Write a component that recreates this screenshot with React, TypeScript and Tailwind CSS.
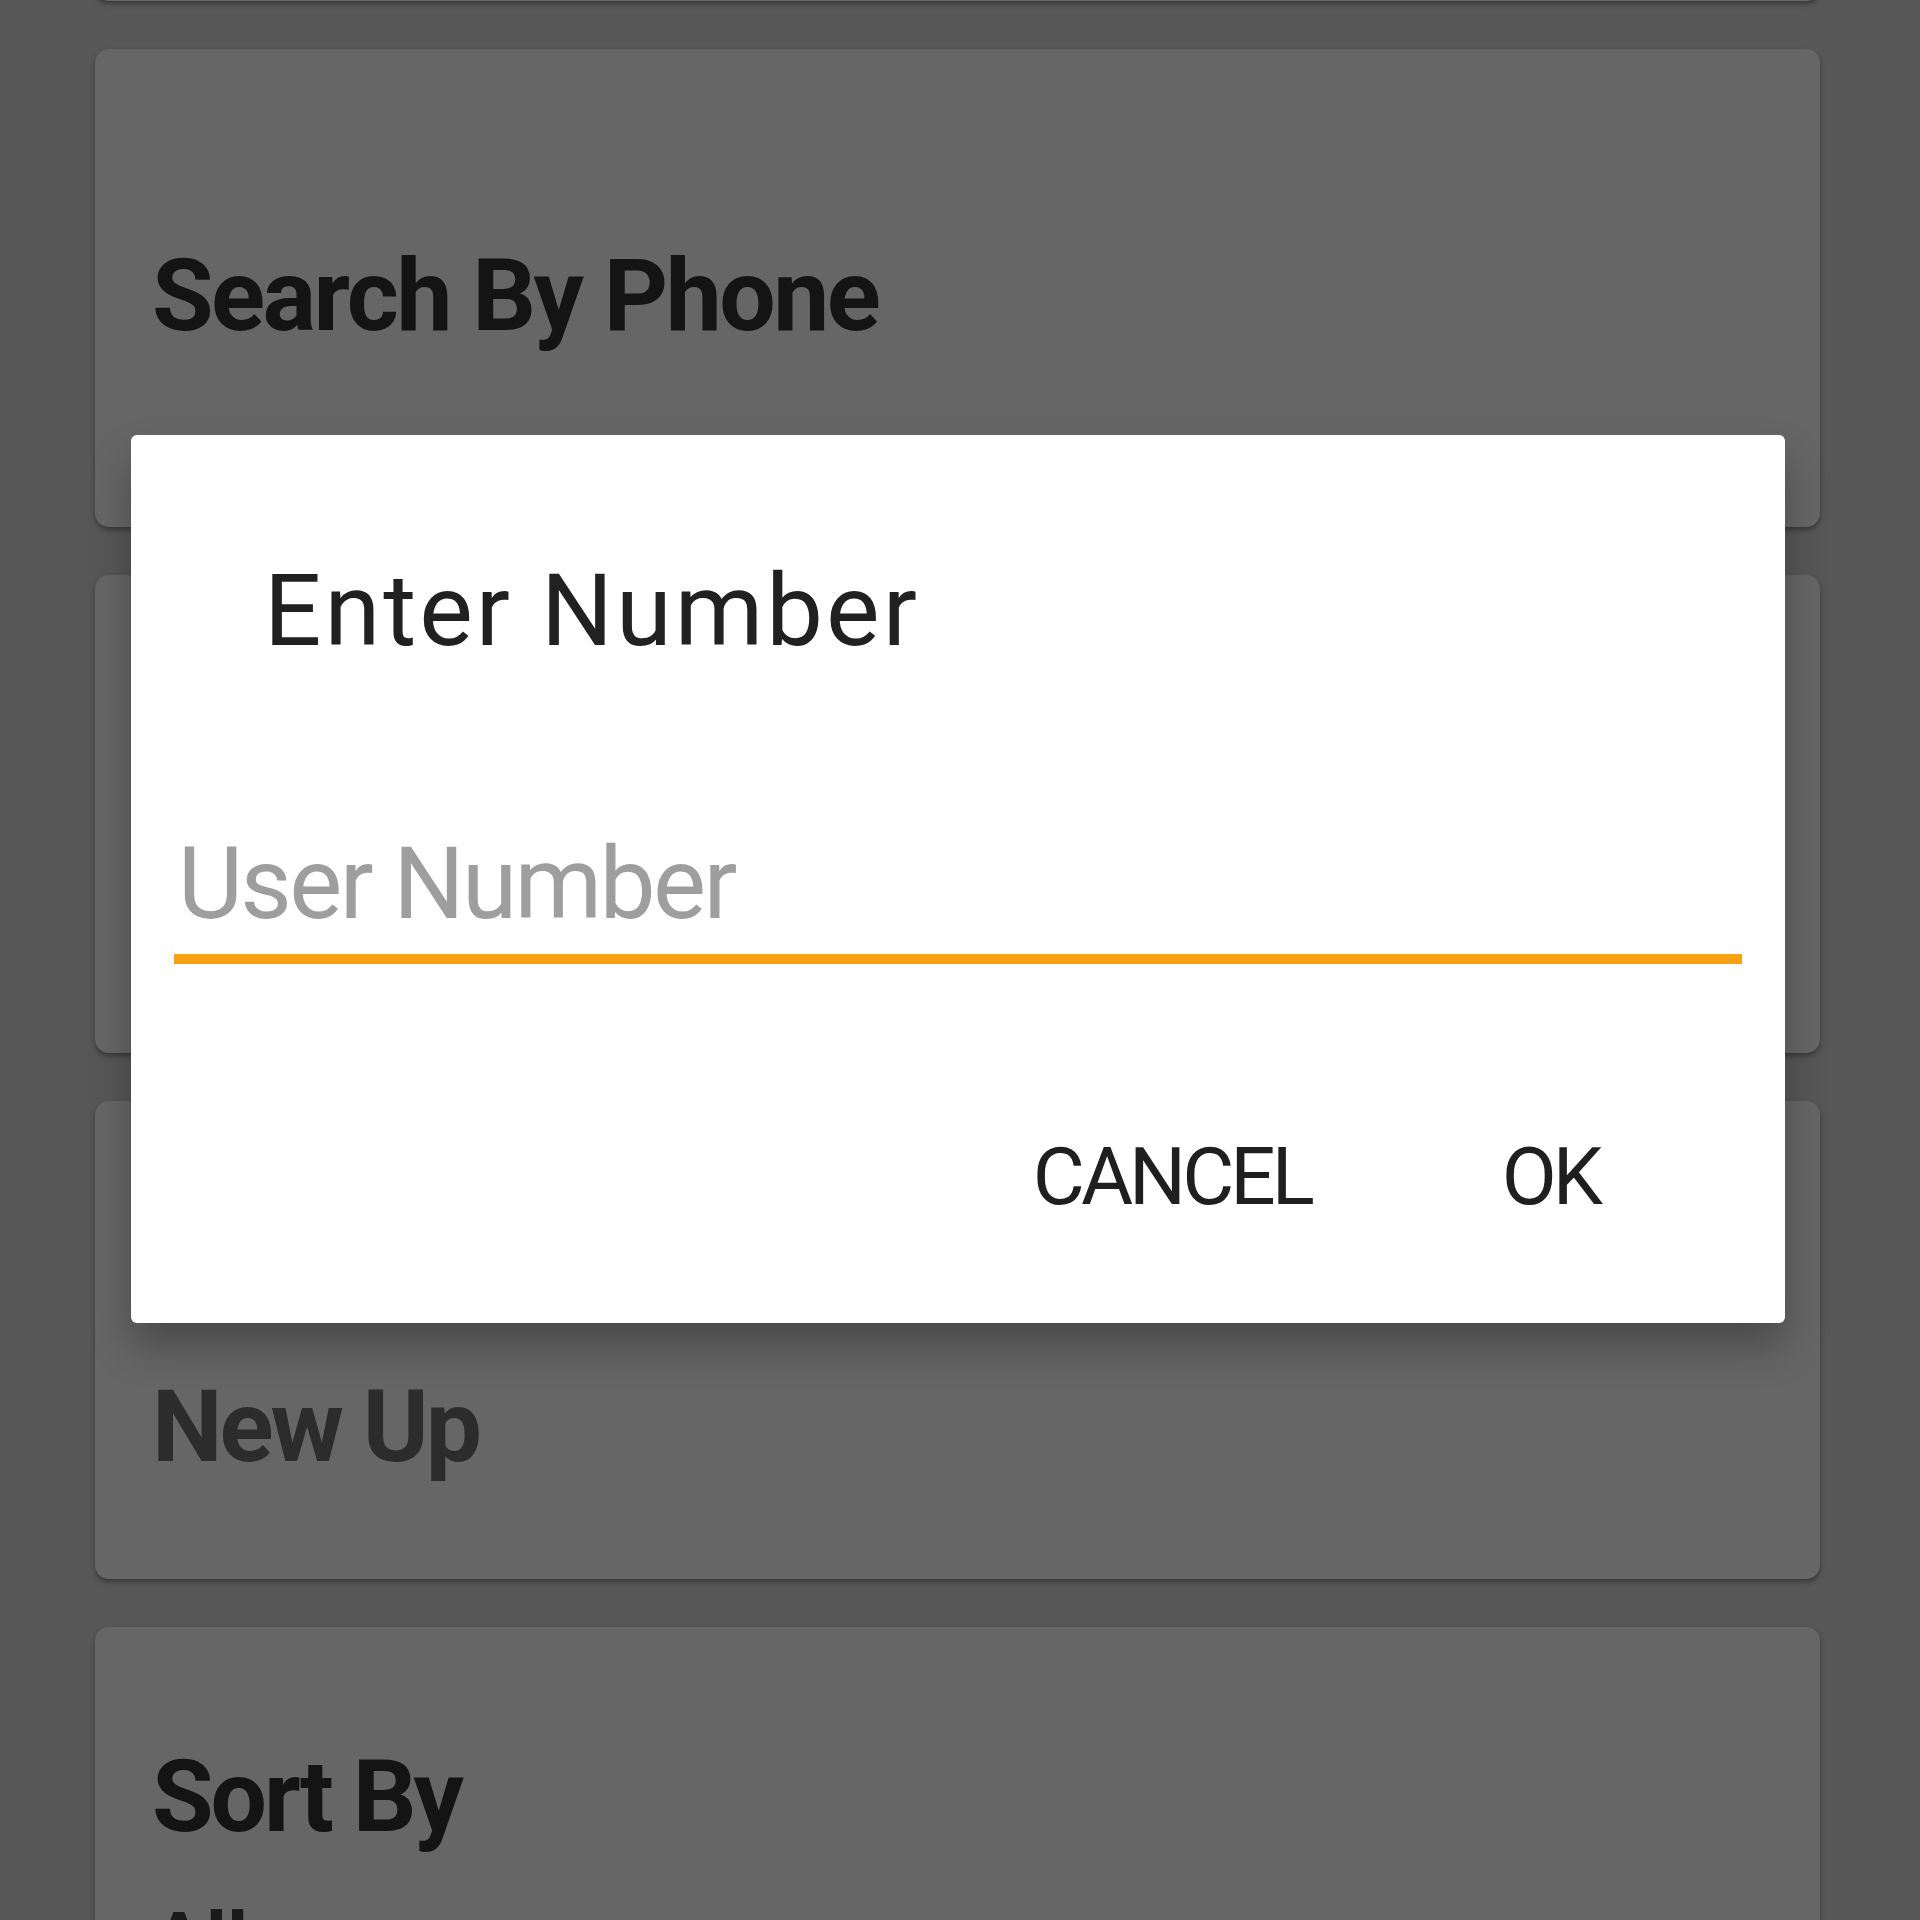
import React from "react";

export default function App() {
  return (
    <div className="relative w-[1920px] h-[1920px] overflow-hidden bg-[#575757] font-['Roboto','Liberation_Sans',sans-serif]">
      <div className="flex flex-col gap-[48px] pl-[95px] pr-[100px]">
        <div className="-mt-[477px] h-[478px] rounded-[14px] bg-[#666666] shadow-[0_3px_5px_rgba(0,0,0,0.35)]" />
        <div className="h-[478px] rounded-[14px] bg-[#666666] shadow-[0_3px_5px_rgba(0,0,0,0.35)] pt-[197px] pl-[57px]">
          <div className="text-[100px] leading-none font-bold tracking-[-2.5px] text-[#141414]">Search By Phone</div>
        </div>
        <div className="h-[478px] rounded-[14px] bg-[#666666] shadow-[0_3px_5px_rgba(0,0,0,0.35)]" />
        <div className="h-[478px] rounded-[14px] bg-[#666666] shadow-[0_3px_5px_rgba(0,0,0,0.35)] pt-[276px] pl-[57px]">
          <div className="text-[100px] leading-none font-bold tracking-[-3px] text-[#2c2c2c]">New Up</div>
        </div>
        <div className="h-[478px] rounded-[14px] bg-[#666666] shadow-[0_3px_5px_rgba(0,0,0,0.35)] pt-[120px] pl-[57px]">
          <div className="text-[100px] leading-none font-bold tracking-[-3px] text-[#141414]">Sort By</div>
          <div className="mt-[55px] text-[80px] leading-none font-bold text-[#1a1a1a]">All</div>
        </div>
      </div>

      <div className="absolute left-[131px] top-[435px] w-[1654px] h-[888px] rounded-[6px] bg-white shadow-[0_24px_40px_rgba(0,0,0,0.28)] flex flex-col">
        <div className="pt-[125px] pl-[133px] text-[101px] leading-none tracking-[3px] text-[#212121]">Enter Number</div>
        <div className="mx-[43px] mt-[173px]">
          <div className="pl-[4px] text-[100px] leading-none tracking-[-2.6px] text-[#9e9e9e]">User Number</div>
          <div className="mt-[20px] h-[10px] bg-[#f6a313]" />
        </div>
        <div className="mt-[173px] flex justify-end gap-[191px] pr-[186px] text-[80px] leading-none tracking-[-4px] text-[#1f1f1f]">
          <span>CANCEL</span>
          <span>OK</span>
        </div>
      </div>
    </div>
  );
}
